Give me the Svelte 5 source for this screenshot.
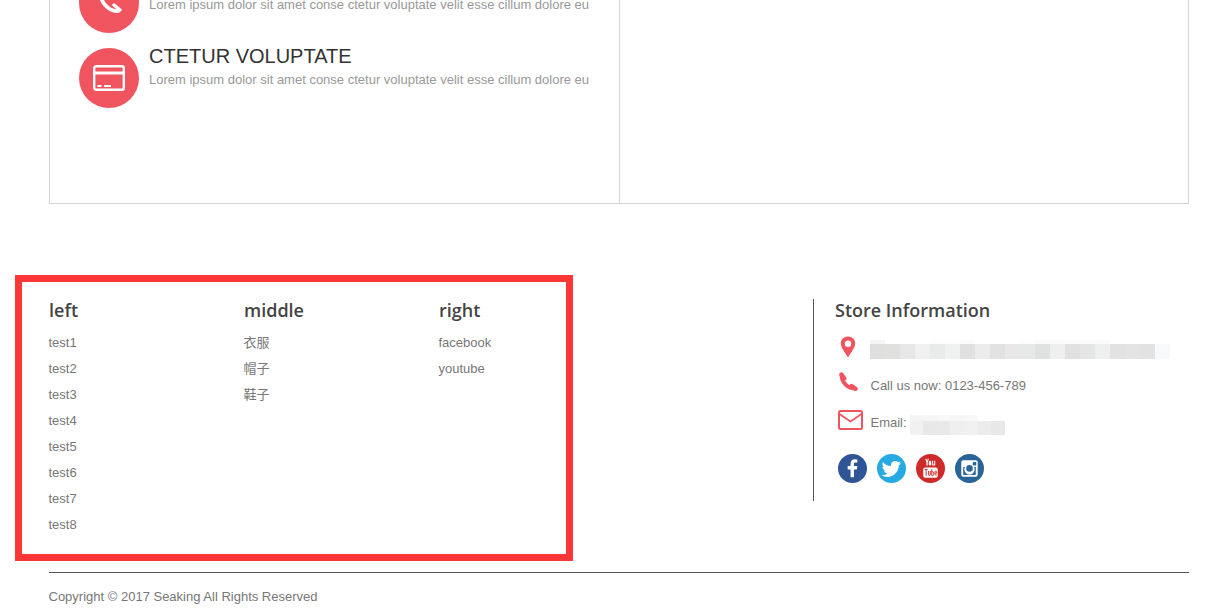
<script>
  const left = ['test1','test2','test3','test4','test5','test6','test7','test8'];
  const middle = ['衣服','帽子','鞋子'];
  const right = ['facebook','youtube'];
  const addr = ['#dfdfde','#e0e0df','#e6e7e6','#eff0ef','#e9eaea','#eff0f0','#e0e0e0','#ececec','#e2e2e2','#e8e8e8','#e7e8e8','#e0e1e1','#eeefef','#e1e1e1','#e4e5e5','#eeeff0','#e2e2e2','#e4e4e4','#e2e2e2','#f8f9fa'];
  const addrTop = ['#f5f5f5','#fff','#fff','#fff','#fdfdfd','#fdfdfd','#fbfbfb','#fff','#fff','#fff','#fdfdfd','#fafafa','#fafafa','#fbfbfb','#fcfcfc','#fafafa','#fff','#fff','#fff','#fff'];
  const mail = ['#f1f1f1','#e8e8e8','#e9e9e9','#efefef','#f0f0f0','#ececec','#e8e8e8'];
  const mailTop = ['#f4f4f4','#f6f6f6','#f8f8f8','#f6f6f6','#f8f8f8','#fff','#fff'];
</script>

<div class="page">
  <section class="card">
    <div class="pane first">
      <div class="feature">
        <span class="circle">
          <svg viewBox="0 0 32 32" width="32" height="32"><path d="M8 5C6 14 16 25 25 24" fill="none" stroke="#fff" stroke-width="3.800" stroke-linecap="round"/><path d="M8 4l4 6M21 18l6 5" fill="none" stroke="#fff" stroke-width="3.400" stroke-linecap="round"/></svg>
        </span>
        <div class="copy">
          <p class="no-title">Lorem ipsum dolor sit amet conse ctetur voluptate velit esse cillum dolore eu</p>
        </div>
      </div>
      <div class="feature">
        <span class="circle">
          <svg viewBox="0 0 32 26" width="32" height="26"><rect x="1.200" y="1.200" width="29.600" height="23.600" rx="2" fill="none" stroke="#fff" stroke-width="2.400"/><rect x="1" y="6.500" width="30" height="3" fill="#fff"/><rect x="4.500" y="20" width="4" height="2" fill="#fff"/><rect x="11" y="20" width="7" height="2" fill="#fff"/></svg>
        </span>
        <div class="copy">
          <h3>CTETUR VOLUPTATE</h3>
          <p>Lorem ipsum dolor sit amet conse ctetur voluptate velit esse cillum dolore eu</p>
        </div>
      </div>
    </div>
    <div class="pane"></div>
  </section>

  <footer>
    <div class="columns">
      <div class="links">
        <div class="col">
          <h4>left</h4>
          <ul>{#each left as t}<li>{t}</li>{/each}</ul>
        </div>
        <div class="col">
          <h4>middle</h4>
          <ul>{#each middle as t}<li>{t}</li>{/each}</ul>
        </div>
        <div class="col">
          <h4>right</h4>
          <ul>{#each right as t}<li>{t}</li>{/each}</ul>
        </div>
      </div>

      <div class="store">
        <h4>Store Information</h4>
        <div class="line addr">
          <svg class="pin" viewBox="0 0 16 22" width="16" height="22"><path fill-rule="evenodd" d="M8 .5C3.700.5.800 3.700.800 7.500c0 4.500 5 10 7.200 14 2.200-4 7.200-9.500 7.200-14C15.200 3.700 12.300.5 8 .5zm0 4a3.200 3.200 0 1 1 0 6.400 3.200 3.200 0 0 1 0-6.400z" fill="#f0545e"/></svg>
          <div class="mosaic">
            <div class="row thin">{#each addrTop as c}<i style="background:{c}"></i>{/each}</div>
            <div class="row">{#each addr as c}<i style="background:{c}"></i>{/each}</div>
          </div>
        </div>
        <div class="line call">
          <svg class="tel" viewBox="0 0 20 20" width="20" height="20"><path d="M3.500 3.500C3.500 10 9.500 16.500 16.500 16.500" fill="none" stroke="#f0545e" stroke-width="3.800" stroke-linecap="round"/><path d="M3.500 2.500L6.200 6.500M13.500 14L17.500 16.800" fill="none" stroke="#f0545e" stroke-width="4.400" stroke-linecap="round"/></svg>
          <span>Call us now: 0123-456-789</span>
        </div>
        <div class="line email">
          <svg class="env" viewBox="0 0 25 20" width="25" height="20"><rect x="1" y="1" width="23" height="18" rx="1.500" fill="none" stroke="#f0545e" stroke-width="2"/><path d="M1.500 4l11 7.500 11-7.500" fill="none" stroke="#f0545e" stroke-width="1.600"/></svg>
          <span>Email:</span>
          <div class="blur">
            <div class="blur-row top">{#each mailTop as c}<i style="background:{c}"></i>{/each}</div>
            <div class="blur-row">{#each mail as c}<i style="background:{c}"></i>{/each}</div>
          </div>
        </div>
        <div class="social">
          <span class="soc fb"><svg viewBox="0 0 30 30" width="29" height="29"><path d="M16.500 24v-8h3l.5-3.500h-3.500v-2c0-1 .3-1.700 1.700-1.700H20V5.700c-.4 0-1.400-.2-2.600-.2-2.600 0-4.400 1.600-4.400 4.500v2.500h-3V16h3v8z" fill="#fff"/></svg></span>
          <span class="soc tw"><svg viewBox="0 0 30 30" width="29" height="29"><path d="M25 9.200c-.8.300-1.600.6-2.400.7.900-.5 1.500-1.300 1.800-2.300-.8.500-1.700.8-2.600 1-1.700-1.800-4.500-1.800-6.100-.1-1.100 1-1.500 2.500-1.200 4-3.300-.2-6.300-1.700-8.300-4.300-1.100 1.900-.6 4.300 1.300 5.500-.7 0-1.300-.2-1.900-.5 0 2 1.400 3.700 3.300 4.100-.6.200-1.200.2-1.800.1.500 1.700 2.100 2.800 3.800 2.900-1.700 1.300-3.800 1.900-6 1.700 6.100 3.900 16.700 1.500 17.800-10.300.9-.6 1.700-1.400 2.300-2.500z" fill="#fff"/></svg></span>
          <span class="soc yt"><svg viewBox="0 0 30 30" width="29" height="29"><path d="M9.500 5l1.300 3.500V12h1.300V8.500L13.400 5h-1.200l-.7 2.200L10.700 5zM14.500 7a1.300 1.300 0 0 0-1.300 1.300v2.400a1.300 1.300 0 0 0 2.600 0V8.300A1.300 1.300 0 0 0 14.500 7zM16.700 7v4c0 1.300 1.500 1.200 2.100.3v.7h1.100V7h-1.100v3.600c-.3.500-1 .5-1 0V7z" fill="#fff"/><rect x="7.500" y="14" width="15" height="10.500" rx="2" fill="#fff"/><path d="M9 16h3M10.500 16v6.500M13 17.500v4c0 .8 1 .8 1.800.2v-4.200M16.300 15.800v6.500c1.700.6 2-.5 2-1.800 0-1.700-.7-2.800-2-2M19.500 19.800h2c0-3-2-3-2-.5 0 2.600 1.300 3.200 2 2.200" fill="none" stroke="#cf2a2a" stroke-width="1"/></svg></span>
          <span class="soc ig"><svg viewBox="0 0 30 30" width="29" height="29"><path fill-rule="evenodd" d="M8.500 6.500h13a2 2 0 0 1 2 2v13a2 2 0 0 1-2 2h-13a2 2 0 0 1-2-2v-13a2 2 0 0 1 2-2zm10.700 1.800a.8.800 0 0 0-.8.800v2a.8.800 0 0 0 .8.800h2a.8.800 0 0 0 .8-.8v-2a.8.800 0 0 0-.8-.8zM8.500 13.500V21a.6.600 0 0 0 .6.600h11.800a.6.600 0 0 0 .6-.6v-7.500h-1.800a5.300 5.300 0 1 1-9.400 0zM15 11.500a3.400 3.400 0 1 0 0 6.800 3.400 3.400 0 0 0 0-6.800z" fill="#fff"/></svg></span>
        </div>
      </div>
    </div>
    <div class="copyright">Copyright © 2017 Seaking All Rights Reserved</div>
  </footer>
</div>

<style>
  :global(body) {
    margin: 0;
    background: #fff;
    font-family: "Liberation Sans", Arial, sans-serif;
  }
  .page {
    width: 1211px;
    height: 609px;
    overflow: hidden;
  }
  .card {
    width: 1140px;
    height: 280px;
    margin: -76px 0 0 49px;
    display: flex;
    border: 1px solid #d4d4d4;
    border-top: 0;
    box-sizing: border-box;
  }
  .pane {
    flex: 1;
    padding: 49px 0 0 29px;
  }
  .pane.first {
    flex: 0 0 570px;
    box-sizing: border-box;
    border-right: 1px solid #d4d4d4;
  }
  .feature {
    display: flex;
    gap: 10px;
    height: 75px;
  }
  .circle {
    width: 60px;
    height: 60px;
    border-radius: 50%;
    background: #f0545e;
    display: flex;
    align-items: center;
    justify-content: center;
    flex: none;
  }
  .copy {
    white-space: nowrap;
  }
  .copy h3 {
    margin: 0;
    font-size: 20px;
    font-weight: 400;
    line-height: 16px;
    color: #333;
    height: 16px;
  }
  .copy p {
    margin: 7px 0 0;
    font-size: 13px;
    line-height: 18px;
    color: #999;
  }
  .copy p.no-title {
    margin-top: 23px;
  }
  footer {
    margin-top: 71px;
  }
  .columns {
    display: flex;
    height: 286px;
  }
  .links {
    margin-left: 15px;
    width: 558px;
    height: 286px;
    box-sizing: border-box;
    border: 7px solid #ff3636;
    padding: 17px 0 0 27px;
    display: flex;
  }
  .col {
    width: 195px;
    flex: none;
  }
  h4 {
    margin: 0;
    font-family: "Open Sans", sans-serif;
    font-size: 18px;
    font-weight: 600;
    line-height: 22px;
    color: #444;
  }
  ul {
    list-style: none;
    margin: 9px 0 0 -0.5px;
    padding: 0;
  }
  li {
    height: 26px;
    line-height: 26px;
    font-size: 13px;
    color: #777;
    font-family: "Liberation Sans", "Noto Sans CJK SC", sans-serif;
  }
  .store {
    margin: 24px 0 0 240px;
    height: 202px;
    box-sizing: border-box;
    border-left: 1px solid #555;
    padding-left: 21px;
    width: 376px;
  }
  .line {
    display: flex;
    align-items: center;
    font-size: 13px;
    color: #777;
  }
  .addr {
    margin-top: 14px;
    height: 24px;
    padding-left: 5px;
  }
  .pin {
    flex: none;
  }
  .mosaic {
    margin-left: 14px;
    margin-top: 5px;
  }
  .row {
    display: flex;
    height: 15px;
  }
  .row.thin {
    height: 4px;
  }
  .row i {
    width: 15px;
  }
  .call {
    margin-top: 14px;
    height: 24px;
    padding-left: 3px;
  }
  .tel {
    flex: none;
    margin: -7px 0 0 0;
  }
  .call span {
    margin-left: 12.5px;
    margin-top: 1px;
  }
  .email {
    margin-top: 13px;
    height: 24px;
    padding-left: 3px;
  }
  .env {
    flex: none;
    margin-top: -5px;
  }
  .email span {
    margin-left: 7.5px;
  }
  .blur {
    margin-top: 5px;
    margin-left: 3px;
  }
  .blur-row {
    display: flex;
    height: 14px;
  }
  .blur-row.top {
    height: 6px;
  }
  .blur-row i {
    width: 13.6px;
  }
  .social {
    display: flex;
    gap: 10px;
    margin-top: 20px;
    padding-left: 3px;
  }
  .soc {
    width: 29px;
    height: 29px;
    border-radius: 50%;
    display: block;
  }
  .soc svg {
    display: block;
  }
  .fb { background: #2f5597; }
  .tw { background: #27a9e1; }
  .yt { background: #cf2a2a; }
  .ig { background: #2a6496; }
  .copyright {
    margin: 11px 22px 0 48.5px;
    border-top: 1px solid #555;
    padding-top: 15px;
    font-size: 13px;
    line-height: 18px;
    color: #777;
  }
</style>
